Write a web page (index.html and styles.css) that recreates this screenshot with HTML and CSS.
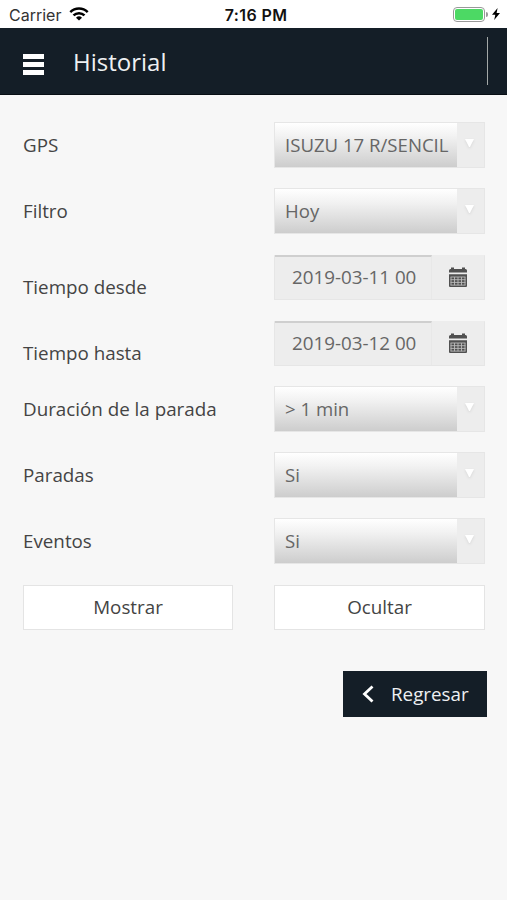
FILE: index.html
```
<!DOCTYPE html>
<html lang="es">
<head>
    <meta charset="UTF-8">
    <meta name="viewport" content="width=device-width, initial-scale=1.0">
    <title>Historial</title>
    <link rel="stylesheet" href="styles.css">
</head>
<body>
    <div class="status-bar">
        <div class="carrier">
            <span>Carrier</span>
            <svg width="20" height="14" viewBox="0 0 20 14" fill="none" stroke="#000" stroke-width="2.5">
                <path d="M1.3 5.1a12.4 12.4 0 0 1 17.4 0" />
                <path d="M4.5 8.4a7.8 7.8 0 0 1 11 0" />
                <path d="M10 13.6L7 10.7a4.3 4.3 0 0 1 6 0z" fill="#000" stroke="none" />
            </svg>
        </div>
        <div class="clock">7:16 PM</div>
        <div class="battery">
            <div class="battery-body"></div>
            <div class="battery-tip"></div>
            <svg width="8" height="12" viewBox="0 0 8 12"><path d="M5.6 0L0 6.8h3.3L2.2 12 8 4.9H4.6z" /></svg>
        </div>
    </div>

    <header class="header">
        <button class="menu-toggle" aria-label="Menu"><span></span><span></span><span></span></button>
        <h1>Historial</h1>
        <div class="header-divider"></div>
    </header>

    <main class="content">
        <div class="field">
            <label>GPS</label>
            <div class="select"><div class="select-value"><span>ISUZU 17 R/SENCIL</span></div><div class="select-arrow"></div></div>
        </div>
        <div class="field">
            <label>Filtro</label>
            <div class="select"><div class="select-value"><span>Hoy</span></div><div class="select-arrow"></div></div>
        </div>
        <div class="field field-date">
            <label>Tiempo desde</label>
            <div class="date">
                <div class="date-value"><span>2019-03-11 00</span></div>
                <div class="date-icon">
                    <svg width="18" height="20" viewBox="0 0 18 20" fill="#505050">
                        <path d="M0 5.5V3.5Q0 2 1.5 2H2V.5h3V2h8V.5h3V2h.5Q18 2 18 3.5V5.5zM0 7.3h18V19q0 1-1 1H1q-1 0-1-1z" />
                        <path d="M1.5 10h15M1.5 12.7h15M1.5 15.4h15M1.5 18.1h15M2 10v8.2M5.5 10v8.2M9 10v8.2M12.5 10v8.2M16 10v8.2" stroke="#bbb" stroke-width=".9" fill="none" />
                    </svg>
                </div>
            </div>
        </div>
        <div class="field field-date">
            <label>Tiempo hasta</label>
            <div class="date">
                <div class="date-value"><span>2019-03-12 00</span></div>
                <div class="date-icon">
                    <svg width="18" height="20" viewBox="0 0 18 20" fill="#505050">
                        <path d="M0 5.5V3.5Q0 2 1.5 2H2V.5h3V2h8V.5h3V2h.5Q18 2 18 3.5V5.5zM0 7.3h18V19q0 1-1 1H1q-1 0-1-1z" />
                        <path d="M1.5 10h15M1.5 12.7h15M1.5 15.4h15M1.5 18.1h15M2 10v8.2M5.5 10v8.2M9 10v8.2M12.5 10v8.2M16 10v8.2" stroke="#bbb" stroke-width=".9" fill="none" />
                    </svg>
                </div>
            </div>
        </div>
        <div class="field">
            <label>Duración de la parada</label>
            <div class="select"><div class="select-value"><span>&gt; 1 min</span></div><div class="select-arrow"></div></div>
        </div>
        <div class="field">
            <label>Paradas</label>
            <div class="select"><div class="select-value"><span>Si</span></div><div class="select-arrow"></div></div>
        </div>
        <div class="field">
            <label>Eventos</label>
            <div class="select"><div class="select-value"><span>Si</span></div><div class="select-arrow"></div></div>
        </div>
        <div class="field">
            <button class="btn">Mostrar</button>
            <button class="btn">Ocultar</button>
        </div>
        <button class="btn-back">
            <svg width="12" height="18" viewBox="0 0 12 18" fill="none" stroke="#fff" stroke-width="2.8"><path d="M10.5 1.5L2.5 9l8 7.5" /></svg>
            Regresar
        </button>
    </main>
</body>
</html>
```

FILE: styles.css
```
* {
    margin: 0;
    padding: 0;
    box-sizing: border-box;
}

body {
    font-family: 'Open Sans', 'Noto Sans', sans-serif;
    font-size: 18.8px;
    background: #f7f7f7;
    color: #444;
    height: 100vh;
}

button {
    font: inherit;
    border: none;
}

.status-bar {
    display: grid;
    grid-template-columns: 1fr auto 1fr;
    align-items: center;
    height: 28px;
    padding: 2px 7px 0 9px;
    background: #fff;
    font-family: Inter, sans-serif;
    font-size: 16px;
    color: #333;
}

.carrier {
    display: flex;
    align-items: center;
    gap: 8px;
}

.carrier svg {
    margin-top: -2px;
}

.clock {
    padding-left: 3px;
    font-weight: 600;
    letter-spacing: 0.4px;
    color: #111;
}

.battery {
    display: flex;
    align-items: center;
    justify-content: flex-end;
    margin-top: -2px;
}

.battery-body {
    width: 32px;
    height: 15px;
    padding: 1px;
    border: 1px solid #999;
    border-radius: 4px;
    background: #4cd964 content-box;
}

.battery-tip {
    width: 2px;
    height: 5px;
    margin: 0 4px 0 1px;
    border-radius: 0 2px 2px 0;
    background: #999;
}

.header {
    display: flex;
    align-items: center;
    height: 67px;
    padding: 0 19px 0 23px;
    background: #141e27;
    border-bottom: 1px solid #080e14;
}

.header h1 {
    margin-left: 29px;
    padding-top: 1px;
    font-size: 24px;
    font-weight: 400;
    line-height: 32px;
    color: #eef0f2;
}

.menu-toggle {
    display: flex;
    flex-direction: column;
    gap: 3px;
    width: 21px;
    margin-top: 6px;
    background: none;
}

.menu-toggle span {
    height: 5px;
    background: #fff;
}

.header-divider {
    width: 1px;
    height: 48px;
    margin-left: auto;
    background: #a3a8a7;
}

.content {
    display: flex;
    flex-direction: column;
    gap: 20px;
    padding: 27px 22px 0 23px;
}

.field {
    display: grid;
    grid-template-columns: 210px 211px;
    justify-content: space-between;
    align-items: center;
    height: 46px;
}

.field label {
    line-height: 26px;
    white-space: nowrap;
}

.field-date label {
    padding-top: 20px;
}

.select,
.date {
    display: flex;
    height: 46px;
    background: #ededed;
    border: 1px solid #e6e6e6;
    font-size: 18.6px;
    color: #666;
}

.select-value {
    width: 182px;
    padding: 0 8px 0 10px;
    line-height: 44px;
    background: linear-gradient(#fff, #f2f2f2 30%, #cdcdcd);
}

.select-value span {
    display: block;
    overflow: hidden;
    white-space: nowrap;
}

.select-arrow {
    flex: 1;
    height: 0;
    margin: 16px 10px 0 8px;
    border: 4px solid transparent;
    border-top: 8px solid #fff;
    border-bottom: none;
    filter: drop-shadow(0 1px 1px #d4d4d4);
}

.date {
    height: 45px;
    margin-top: 1px;
    border-top-color: #ededed;
    font-size: 18.8px;
}

.date-value {
    width: 157px;
    margin-top: -1px;
    padding: 0 13px 0 17px;
    line-height: 41px;
    white-space: nowrap;
    border-top: 2px solid #cfcfcf;
    border-right: 1px solid #e8e8e8;
}

.date-icon {
    flex: 1;
    display: flex;
    align-items: center;
    justify-content: center;
    padding-bottom: 1px;
}

.btn {
    height: 45px;
    margin-top: 1px;
    padding-bottom: 1px;
    background: #fff;
    border: 1px solid #e4e4e4;
    color: #444;
}

.btn-back {
    display: flex;
    align-items: center;
    align-self: flex-end;
    gap: 17px;
    width: 144px;
    height: 46px;
    margin: 21px -2px 0 0;
    padding: 0 0 1px 19px;
    background: #141e27;
    color: #eef0f2;
}
```
